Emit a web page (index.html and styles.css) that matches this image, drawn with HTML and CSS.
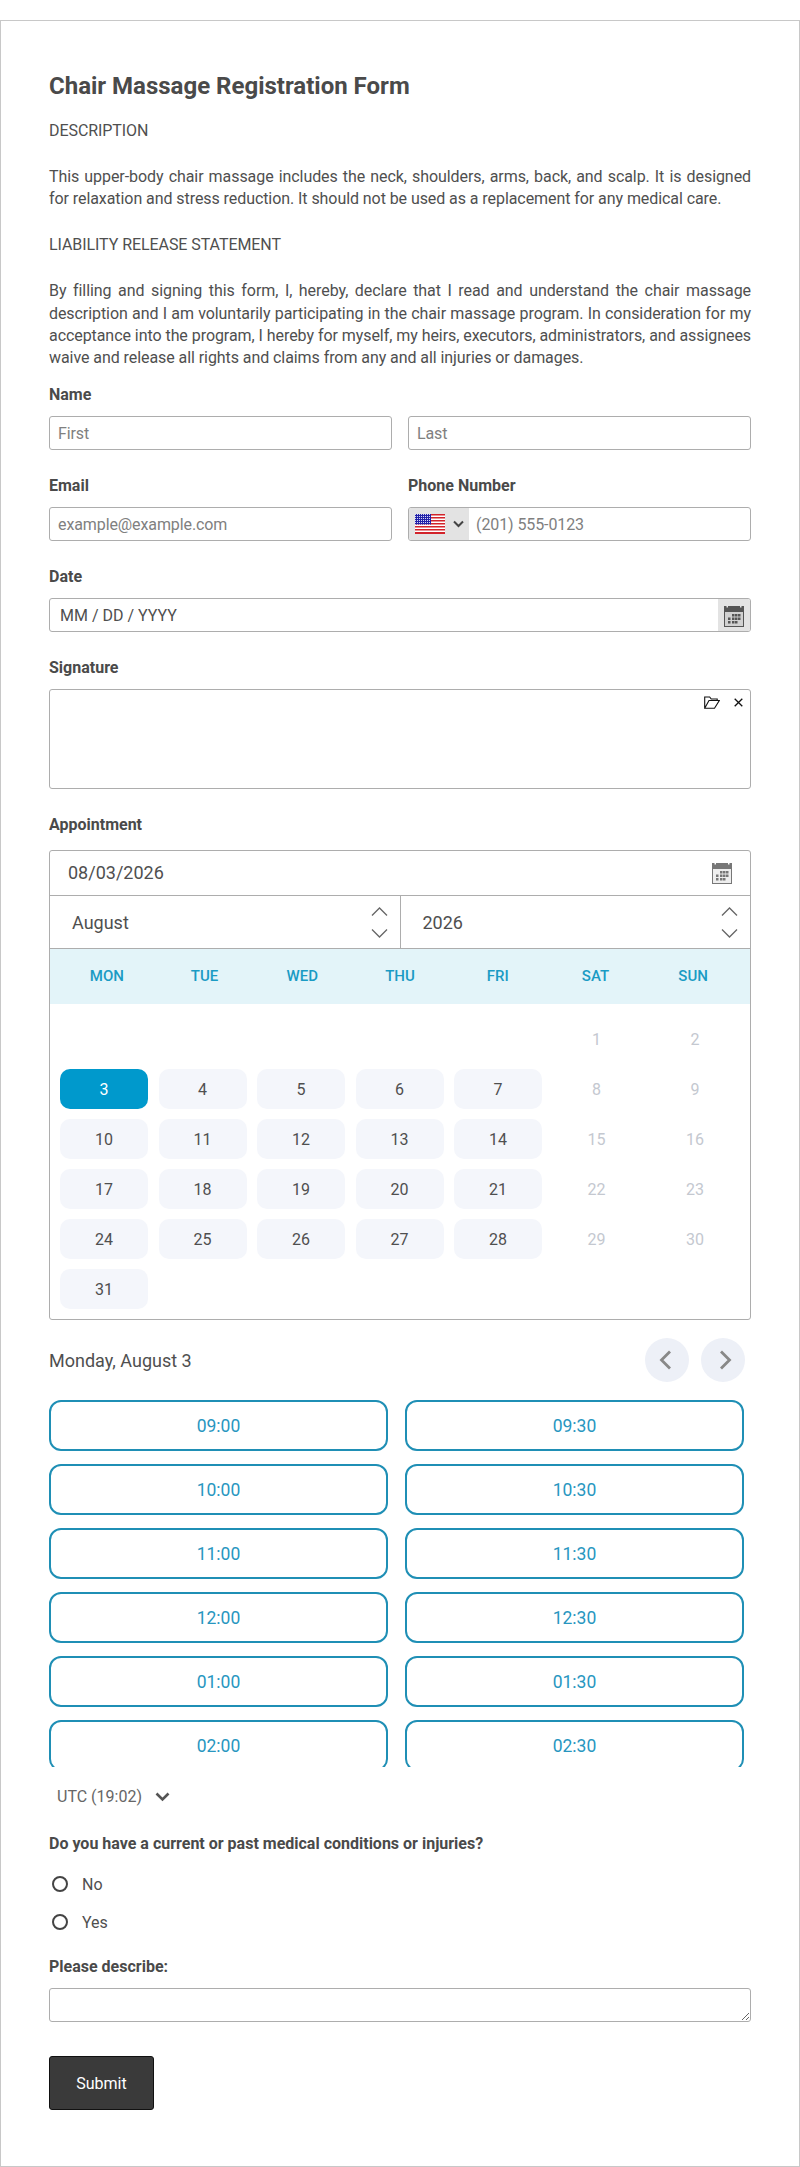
FILE: index.html
```html
<!DOCTYPE html>
<html lang="en">
<head>
    <meta charset="UTF-8">
    <meta name="viewport" content="width=device-width, initial-scale=1.0">
    <title>Chair Massage Registration Form</title>
    <link rel="stylesheet" href="styles.css">
</head>
<body>

    <svg class="defs" width="0" height="0">
        <symbol id="cal" viewBox="0 0 20 23">
            <rect x="0.500" y="6" width="19" height="16.500" fill="currentColor" fill-opacity="0.120" stroke="currentColor"/>
            <path d="M0 2h2.500v1.500h1.500V2h12v1.500h1.500V2H20v6H0z" fill="currentColor"/>
            <g fill="currentColor">
                <rect x="8" y="10" width="2.500" height="2.500"/><rect x="11" y="10" width="2.500" height="2.500"/><rect x="14" y="10" width="2.500" height="2.500"/>
                <rect x="4" y="13.500" width="2.500" height="2.500"/><rect x="8" y="13.500" width="2.500" height="2.500"/><rect x="11" y="13.500" width="2.500" height="2.500"/><rect x="14" y="13.500" width="2.500" height="2.500"/>
                <rect x="4" y="17" width="2.500" height="2.500"/><rect x="8" y="17" width="2.500" height="2.500"/><rect x="11" y="17" width="2.500" height="2.500"/>
            </g>
        </symbol>
    </svg>

    <form class="form-card">
        <h1>Chair Massage Registration Form</h1>
        <p class="intro">DESCRIPTION</p>
        <p class="intro">This upper-body chair massage includes the neck, shoulders, arms, back, and scalp. It is designed for relaxation and stress reduction. It should not be used as a replacement for any medical care.</p>
        <p class="intro">LIABILITY RELEASE STATEMENT</p>
        <p class="intro last">By filling and signing this form, I, hereby, declare that I read and understand the chair massage description and I am voluntarily participating in the chair massage program. In consideration for my acceptance into the program, I hereby for myself, my heirs, executors, administrators, and assignees waive and release all rights and claims from any and all injuries or damages.</p>

        <div class="field">
            <label class="field-label">Name</label>
            <div class="two-col">
                <input class="text-input" type="text" placeholder="First">
                <input class="text-input" type="text" placeholder="Last">
            </div>
        </div>

        <div class="two-col field">
            <div>
                <label class="field-label">Email</label>
                <input class="text-input" type="text" placeholder="example@example.com">
            </div>
            <div>
                <label class="field-label">Phone Number</label>
                <div class="input-box">
                    <div class="flag-select">
                        <svg class="flag" width="30" height="20" viewBox="0 0 30 20">
                            <defs>
                                <pattern id="stars" width="2" height="2" patternUnits="userSpaceOnUse">
                                    <rect width="2" height="2" fill="#2222a8"/>
                                    <rect width="1" height="1" fill="#d5d5f5"/>
                                </pattern>
                            </defs>
                            <rect width="30" height="20" fill="#fff"/>
                            <g fill="#d2232a">
                                <rect y="0" width="30" height="1.500"/><rect y="3" width="30" height="1.500"/><rect y="6" width="30" height="1.500"/><rect y="9" width="30" height="1.500"/><rect y="12" width="30" height="1.500"/><rect y="15" width="30" height="1.500"/><rect y="18" width="30" height="2"/>
                            </g>
                            <rect width="16" height="10.500" fill="url(#stars)"/>
                        </svg>
                        <svg width="11" height="8" viewBox="0 0 11 8"><path d="M1 1.500l4.500 4.500 4.500-4.500" fill="none" stroke="#444" stroke-width="2"/></svg>
                    </div>
                    <input class="bare-input phone-input" type="text" placeholder="(201) 555-0123">
                </div>
            </div>
        </div>

        <div class="field">
            <label class="field-label">Date</label>
            <div class="input-box">
                <input class="bare-input date-input" type="text" placeholder="MM / DD / YYYY">
                <div class="date-icon"><svg width="20" height="23"><use href="#cal"/></svg></div>
            </div>
        </div>

        <div class="field">
            <label class="field-label">Signature</label>
            <div class="signature-box">
                <svg width="16" height="13" viewBox="0 0 16 13"><path d="M0.700 12.300V1h5l1.500 2h6v1.500M0.700 12.300L5 4.500h10.300l-4.800 7.800z" fill="none" stroke="#111" stroke-width="1.100"/></svg>
                <svg class="clear-icon" width="9" height="9" viewBox="0 0 9 9"><path d="M0.700 0.700l7.600 7.600M8.300 0.700L0.700 8.300" fill="none" stroke="#111" stroke-width="1.300"/></svg>
            </div>
        </div>

        <label class="field-label appointment-label">Appointment</label>
        <div class="calendar">
            <div class="cal-date">
                <span>08/03/2026</span>
                <svg width="20" height="23"><use href="#cal"/></svg>
            </div>
            <div class="cal-select">
                <div class="cal-select-cell">
                    <span>August</span>
                    <div class="spinner">
                        <svg width="17" height="9" viewBox="0 0 17 9"><path d="M1 8.500L8.500 1 16 8.500" fill="none" stroke="#666" stroke-width="1.300"/></svg>
                        <svg width="17" height="9" viewBox="0 0 17 9"><path d="M1 0.500L8.500 8 16 0.500" fill="none" stroke="#666" stroke-width="1.300"/></svg>
                    </div>
                </div>
                <div class="cal-select-cell">
                    <span>2026</span>
                    <div class="spinner">
                        <svg width="17" height="9" viewBox="0 0 17 9"><path d="M1 8.500L8.500 1 16 8.500" fill="none" stroke="#666" stroke-width="1.300"/></svg>
                        <svg width="17" height="9" viewBox="0 0 17 9"><path d="M1 0.500L8.500 8 16 0.500" fill="none" stroke="#666" stroke-width="1.300"/></svg>
                    </div>
                </div>
            </div>
            <div class="cal-head">
                <span>MON</span><span>TUE</span><span>WED</span><span>THU</span><span>FRI</span><span>SAT</span><span>SUN</span>
            </div>
            <div class="cal-days">
                <span></span><span></span><span></span><span></span><span></span>
                <span class="day off">1</span><span class="day off">2</span>
                <span class="day selected">3</span><span class="day">4</span><span class="day">5</span><span class="day">6</span><span class="day">7</span>
                <span class="day off">8</span><span class="day off">9</span>
                <span class="day">10</span><span class="day">11</span><span class="day">12</span><span class="day">13</span><span class="day">14</span>
                <span class="day off">15</span><span class="day off">16</span>
                <span class="day">17</span><span class="day">18</span><span class="day">19</span><span class="day">20</span><span class="day">21</span>
                <span class="day off">22</span><span class="day off">23</span>
                <span class="day">24</span><span class="day">25</span><span class="day">26</span><span class="day">27</span><span class="day">28</span>
                <span class="day off">29</span><span class="day off">30</span>
                <span class="day">31</span>
            </div>
        </div>

        <div class="slot-head">
            <span>Monday, August 3</span>
            <div class="slot-nav">
                <button type="button" class="round-btn prev"><svg width="13" height="20" viewBox="0 0 13 20"><path d="M11 1.500L2.500 10l8.500 8.500" fill="none" stroke="#888" stroke-width="2.800"/></svg></button>
                <button type="button" class="round-btn next"><svg width="13" height="20" viewBox="0 0 13 20"><path d="M2 1.500L10.500 10 2 18.500" fill="none" stroke="#888" stroke-width="2.800"/></svg></button>
            </div>
        </div>

        <div class="slots">
            <button type="button" class="slot">09:00</button><button type="button" class="slot">09:30</button>
            <button type="button" class="slot">10:00</button><button type="button" class="slot">10:30</button>
            <button type="button" class="slot">11:00</button><button type="button" class="slot">11:30</button>
            <button type="button" class="slot">12:00</button><button type="button" class="slot">12:30</button>
            <button type="button" class="slot">01:00</button><button type="button" class="slot">01:30</button>
            <button type="button" class="slot">02:00</button><button type="button" class="slot">02:30</button>
        </div>

        <div class="timezone">
            <span>UTC (19:02)</span>
            <svg width="15" height="10" viewBox="0 0 15 10"><path d="M1.500 1.500l6 6 6-6" fill="none" stroke="#555" stroke-width="2.600"/></svg>
        </div>

        <label class="field-label question">Do you have a current or past medical conditions or injuries?</label>
        <div class="radio-list">
            <label class="radio-row"><input type="radio" name="conditions"><span>No</span></label>
            <label class="radio-row"><input type="radio" name="conditions"><span>Yes</span></label>
        </div>

        <label class="field-label">Please describe:</label>
        <textarea class="text-input describe"></textarea>

        <button type="button" class="submit-btn">Submit</button>
    </form>

</body>
</html>
```

FILE: styles.css
```css
* {
    box-sizing: border-box;
}
body {
    margin: 0;
    padding-top: 20px;
    font-family: Roboto, Arial, sans-serif;
    font-size: 16px;
    color: #4f4f4f;
    background: #fff;
}
.defs {
    position: absolute;
}
.form-card {
    width: 800px;
    padding: 50px 48px 56px;
    border: 1px solid #c8c8c8;
}
h1 {
    margin: 0 0 19px;
    font-size: 24px;
    line-height: 30px;
    font-weight: 700;
    color: #4a4a4a;
}
.intro {
    margin: 0 0 23.5px;
    line-height: 22.4px;
    letter-spacing: -0.07px;
    text-align: justify;
}
.intro.last {
    margin-bottom: 14.3px;
}
.field {
    margin-bottom: 25px;
}
.field-label {
    display: block;
    margin-bottom: 10px;
    line-height: 22px;
    font-weight: 700;
    color: #4a4a4a;
}
.two-col {
    display: flex;
    gap: 16px;
}
.two-col > * {
    flex: 1;
    min-width: 0;
}
.text-input {
    display: block;
    width: 100%;
    height: 34px;
    padding: 0 8px;
    border: 1px solid #adadad;
    border-radius: 3px;
    font: inherit;
    color: #444;
    background: #fff;
}
.input-box {
    display: flex;
    height: 34px;
    border: 1px solid #adadad;
    border-radius: 3px;
    overflow: hidden;
}
.bare-input {
    flex: 1;
    min-width: 0;
    border: none;
    outline: none;
    font: inherit;
    background: transparent;
}
::placeholder {
    color: #808080;
    letter-spacing: -0.1px;
    opacity: 1;
}
.flag-select {
    display: flex;
    align-items: center;
    gap: 8px;
    width: 60px;
    padding-left: 6px;
    background: #e3e3e3;
}
.phone-input {
    padding: 0 7px;
}
.date-input {
    padding: 0 10px;
}
.date-input::placeholder {
    color: #4f4f4f;
    letter-spacing: 0;
}
.date-icon {
    display: flex;
    align-items: center;
    justify-content: center;
    width: 32px;
    background: #e3e3e3;
    color: #555;
}
.signature-box {
    display: flex;
    justify-content: flex-end;
    align-items: flex-start;
    gap: 14px;
    height: 100px;
    padding: 6px 7px 0;
    border: 1px solid #adadad;
    border-radius: 3px;
}
.clear-icon {
    margin-top: 2px;
}
.appointment-label {
    margin-bottom: 14px;
}
.calendar {
    height: 470px;
    border: 1px solid #adadad;
    border-radius: 3px;
}
.cal-date {
    display: flex;
    justify-content: space-between;
    align-items: center;
    height: 45px;
    padding: 0 18px 2px;
    border-bottom: 1px solid #adadad;
    font-size: 18px;
}
.cal-date svg {
    color: #777;
}
.cal-select {
    display: flex;
    height: 53px;
    border-bottom: 1px solid #adadad;
    font-size: 18px;
}
.cal-select-cell {
    flex: 1;
    display: flex;
    justify-content: space-between;
    align-items: center;
    padding: 0 12px 0 22px;
}
.cal-select-cell:first-child {
    border-right: 1px solid #adadad;
}
.spinner {
    display: flex;
    flex-direction: column;
    gap: 13px;
}
.spinner svg {
    display: block;
}
.cal-head {
    display: grid;
    grid-template-columns: repeat(7, 1fr);
    align-items: center;
    height: 55px;
    padding: 0 8px 2px;
    background: #e3f4f9;
    color: #1a9bc4;
    font-size: 15px;
    font-weight: 500;
    text-align: center;
}
.cal-days {
    display: grid;
    grid-template-columns: repeat(7, 1fr);
    grid-auto-rows: 40px;
    gap: 10px 10.5px;
    padding: 15px 11px 0 10px;
}
.day {
    display: flex;
    align-items: center;
    justify-content: center;
    border-radius: 10px;
    background: #f4f6fb;
}
.day.off {
    background: none;
    color: #c4c8d0;
}
.day.selected {
    background: #0099cc;
    color: #fff;
}
.slot-head {
    display: flex;
    justify-content: space-between;
    align-items: center;
    margin: 18px 0;
    padding-right: 6px;
    font-size: 18px;
}
.slot-nav {
    display: flex;
    gap: 12px;
}
.round-btn {
    display: flex;
    align-items: center;
    justify-content: center;
    width: 44px;
    height: 44px;
    border: none;
    border-radius: 50%;
    background: #edf0f7;
}
.round-btn.prev {
    padding: 0 4px 0 0;
}
.round-btn.next {
    padding: 0 0 0 4px;
}
.slots {
    display: grid;
    grid-template-columns: 1fr 1fr;
    grid-auto-rows: 51px;
    gap: 13px 17px;
    height: 367px;
    padding-right: 7px;
    overflow: hidden;
}
.slot {
    border: 2px solid #1f8fb5;
    border-radius: 12px;
    background: #fff;
    color: #2896bf;
    font: inherit;
    font-size: 17.5px;
}
.timezone {
    display: flex;
    align-items: center;
    gap: 13px;
    margin-top: 20px;
    padding-left: 8px;
    line-height: 20px;
    color: #666;
}
.question {
    margin-top: 26px;
    margin-bottom: 17px;
}
.radio-list {
    display: flex;
    flex-direction: column;
    gap: 14px;
    margin-bottom: 22px;
}
.radio-row {
    display: flex;
    align-items: center;
    gap: 14px;
    height: 24px;
    padding-left: 3px;
}
.radio-row input {
    appearance: none;
    width: 16px;
    height: 16px;
    margin: 0;
    border: 2px solid #444;
    border-radius: 50%;
}
.describe {
    resize: vertical;
}
.submit-btn {
    display: block;
    width: 105px;
    height: 54px;
    margin-top: 34px;
    border: 1px solid #111;
    border-radius: 3px;
    background: #3a3a3a;
    color: #fff;
    font: inherit;
}
```
